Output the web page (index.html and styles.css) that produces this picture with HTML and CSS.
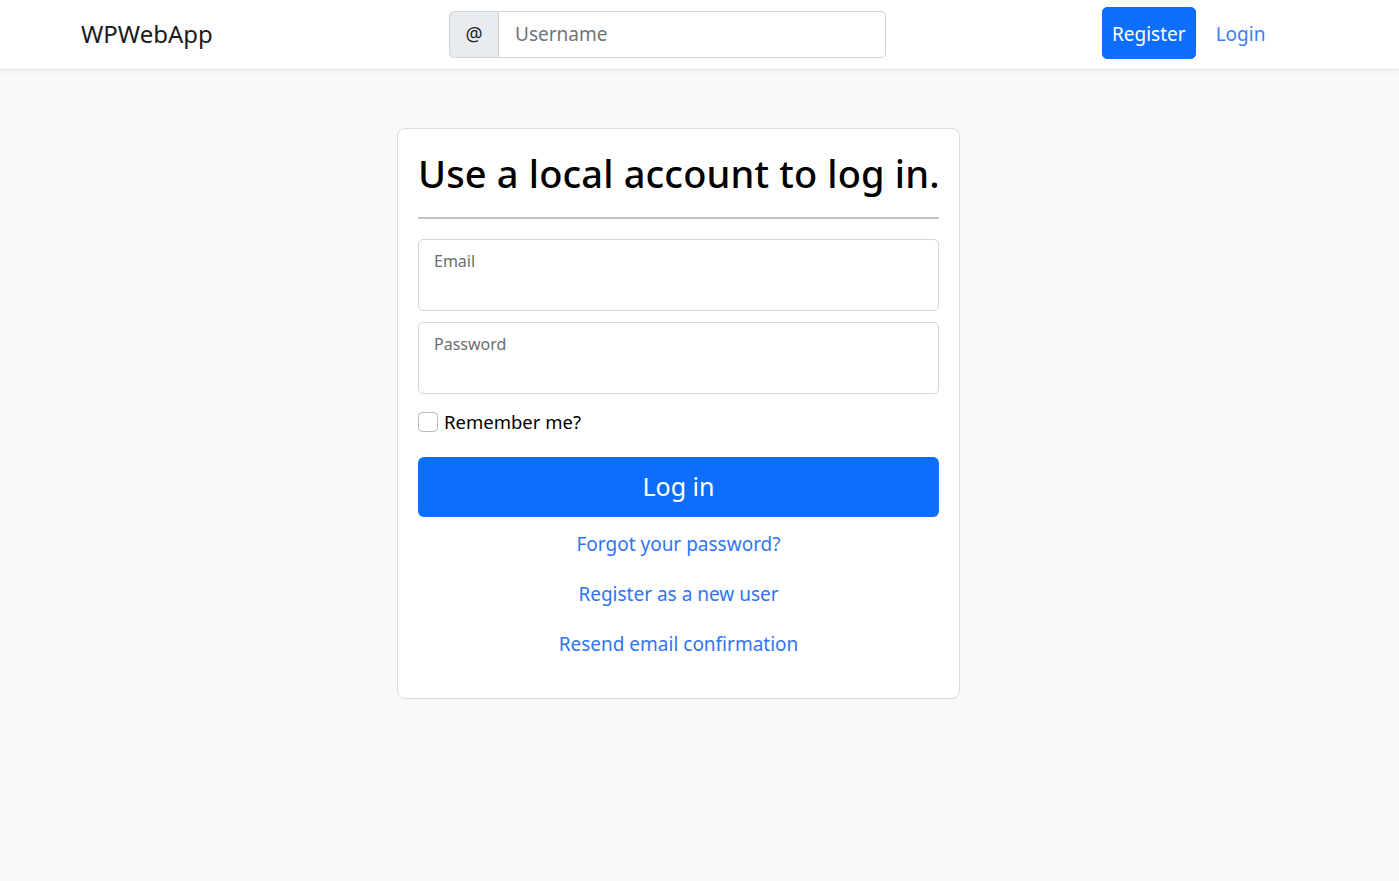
FILE: index.html
```html
<!DOCTYPE html>
<html lang="en">
<head>
<meta charset="utf-8">
<title>Log in - WPWebApp</title>
<link rel="stylesheet" href="styles.css">
</head>
<body>
<header class="navbar">
  <a class="brand" href="#">WPWebApp</a>
  <div class="input-group">
    <span class="addon">@</span>
    <input class="search" type="text" placeholder="Username">
  </div>
  <div class="spacer"></div>
  <nav class="actions">
    <a class="btn-register" href="#">Register</a>
    <a class="nav-link" href="#">Login</a>
  </nav>
</header>
<main class="page">
  <section class="card">
    <h2 class="title">Use a local account to log in.</h2>
    <hr class="rule">
    <div class="floating">
      <input class="float-input" type="email">
      <label class="float-label">Email</label>
    </div>
    <div class="floating">
      <input class="float-input" type="password">
      <label class="float-label">Password</label>
    </div>
    <label class="check">
      <span class="check-box"></span>
      <span class="check-label">Remember me?</span>
    </label>
    <button class="btn-login" type="button">Log in</button>
    <div class="links">
      <a href="#">Forgot your password?</a>
      <a href="#">Register as a new user</a>
      <a href="#">Resend email confirmation</a>
    </div>
  </section>
</main>
</body>
</html>
```

FILE: styles.css
```css
* { box-sizing: border-box; }
html, body { margin: 0; padding: 0; }
body {
  font-family: "Noto Sans", "Open Sans", sans-serif;
  font-size: 20px;
  line-height: 1.5;
  color: #212529;
  background: #f9f9f9;
  min-height: 881px;
}
a { color: #0d6efd; text-decoration: none; }

.navbar {
  height: 70px;
  background: #fff;
  border-bottom: 1px solid #e3e3e3;
  box-shadow: 0 2px 6px rgba(0,0,0,0.04);
  display: grid;
  grid-template-columns: 368px 437px 216px auto;
  align-items: center;
  padding-left: 81px;
}
.brand {
  color: #1a1a1a;
  font-size: 24px;
  line-height: 1.5;
  margin-top: -2px;
}
.input-group {
  display: flex;
  height: 47px;
  margin-top: -1px;
}
.addon {
  width: 50px;
  background: #e9ecef;
  border: 1px solid #ced4da;
  border-radius: 5px 0 0 5px;
  display: flex;
  align-items: center;
  justify-content: center;
  font-size: 19px;
  color: #212529;
}
.search {
  flex: 1;
  border: 1px solid #ced4da;
  border-left: 0;
  border-radius: 0 5px 5px 0;
  padding: 0 16px;
  font: inherit;
  font-size: 19px;
  color: #212529;
  background: #fff;
  outline: none;
}
.search::placeholder { color: #6c757d; }
.actions {
  display: flex;
  align-items: center;
  margin-top: -4px;
}
.btn-register {
  background: #0d6efd;
  color: #fff;
  font-size: 19px;
  padding: 10px 9px 8px;
  border-radius: 5px;
  line-height: 32px;
  border: 1px solid #0d6efd;
}
.nav-link {
  padding: 12px 20px 8px;
  font-size: 19px;
  color: #3c7df7;
}

.page {
  padding-top: 58px;
  padding-left: 397px;
}
.card {
  width: 563px;
  background: #fff;
  border: 1px solid #dcdcdc;
  border-radius: 8px;
  padding: 20px 20px 20px;
}
.title {
  margin: 0;
  font-size: 38px;
  letter-spacing: 0.15px;
  white-space: nowrap;
  font-weight: 500;
  line-height: 48px;
  color: #000;
}
.rule {
  margin: 20px 0 20px;
  border: 0;
  border-top: 2px solid #c2c2c2;
}
.floating {
  position: relative;
  height: 72px;
  margin-bottom: 11px;
}
.float-input {
  display: block;
  width: 100%;
  height: 100%;
  border: 1px solid #d3d6da;
  border-radius: 5px;
  background: #fff;
  font: inherit;
  outline: none;
  padding: 32px 15px 8px;
}
.float-label {
  position: absolute;
  left: 16px;
  top: 10px;
  font-size: 16px;
  line-height: 24px;
  color: #6a6d70;
}
.check {
  display: flex;
  align-items: center;
  gap: 6px;
  height: 30px;
  margin-top: 13px;
  margin-bottom: 20px;
}
.check-box {
  width: 20px;
  height: 20px;
  border: 1px solid #b9bcc0;
  border-radius: 4px;
  background: #fff;
}
.check-label { color: #000; font-size: 18.5px; }
.btn-login {
  display: block;
  width: 100%;
  height: 60px;
  background: #0d6efd;
  color: #fff;
  border: 0;
  border-radius: 6px;
  font: inherit;
  font-size: 25px;
  cursor: pointer;
}
.links {
  display: flex;
  flex-direction: column;
  align-items: center;
  gap: 20px;
  margin-top: 12px;
  padding-bottom: 19px;
}
.links a { line-height: 30px; color: #2f74f6; font-size: 19px; }
```
